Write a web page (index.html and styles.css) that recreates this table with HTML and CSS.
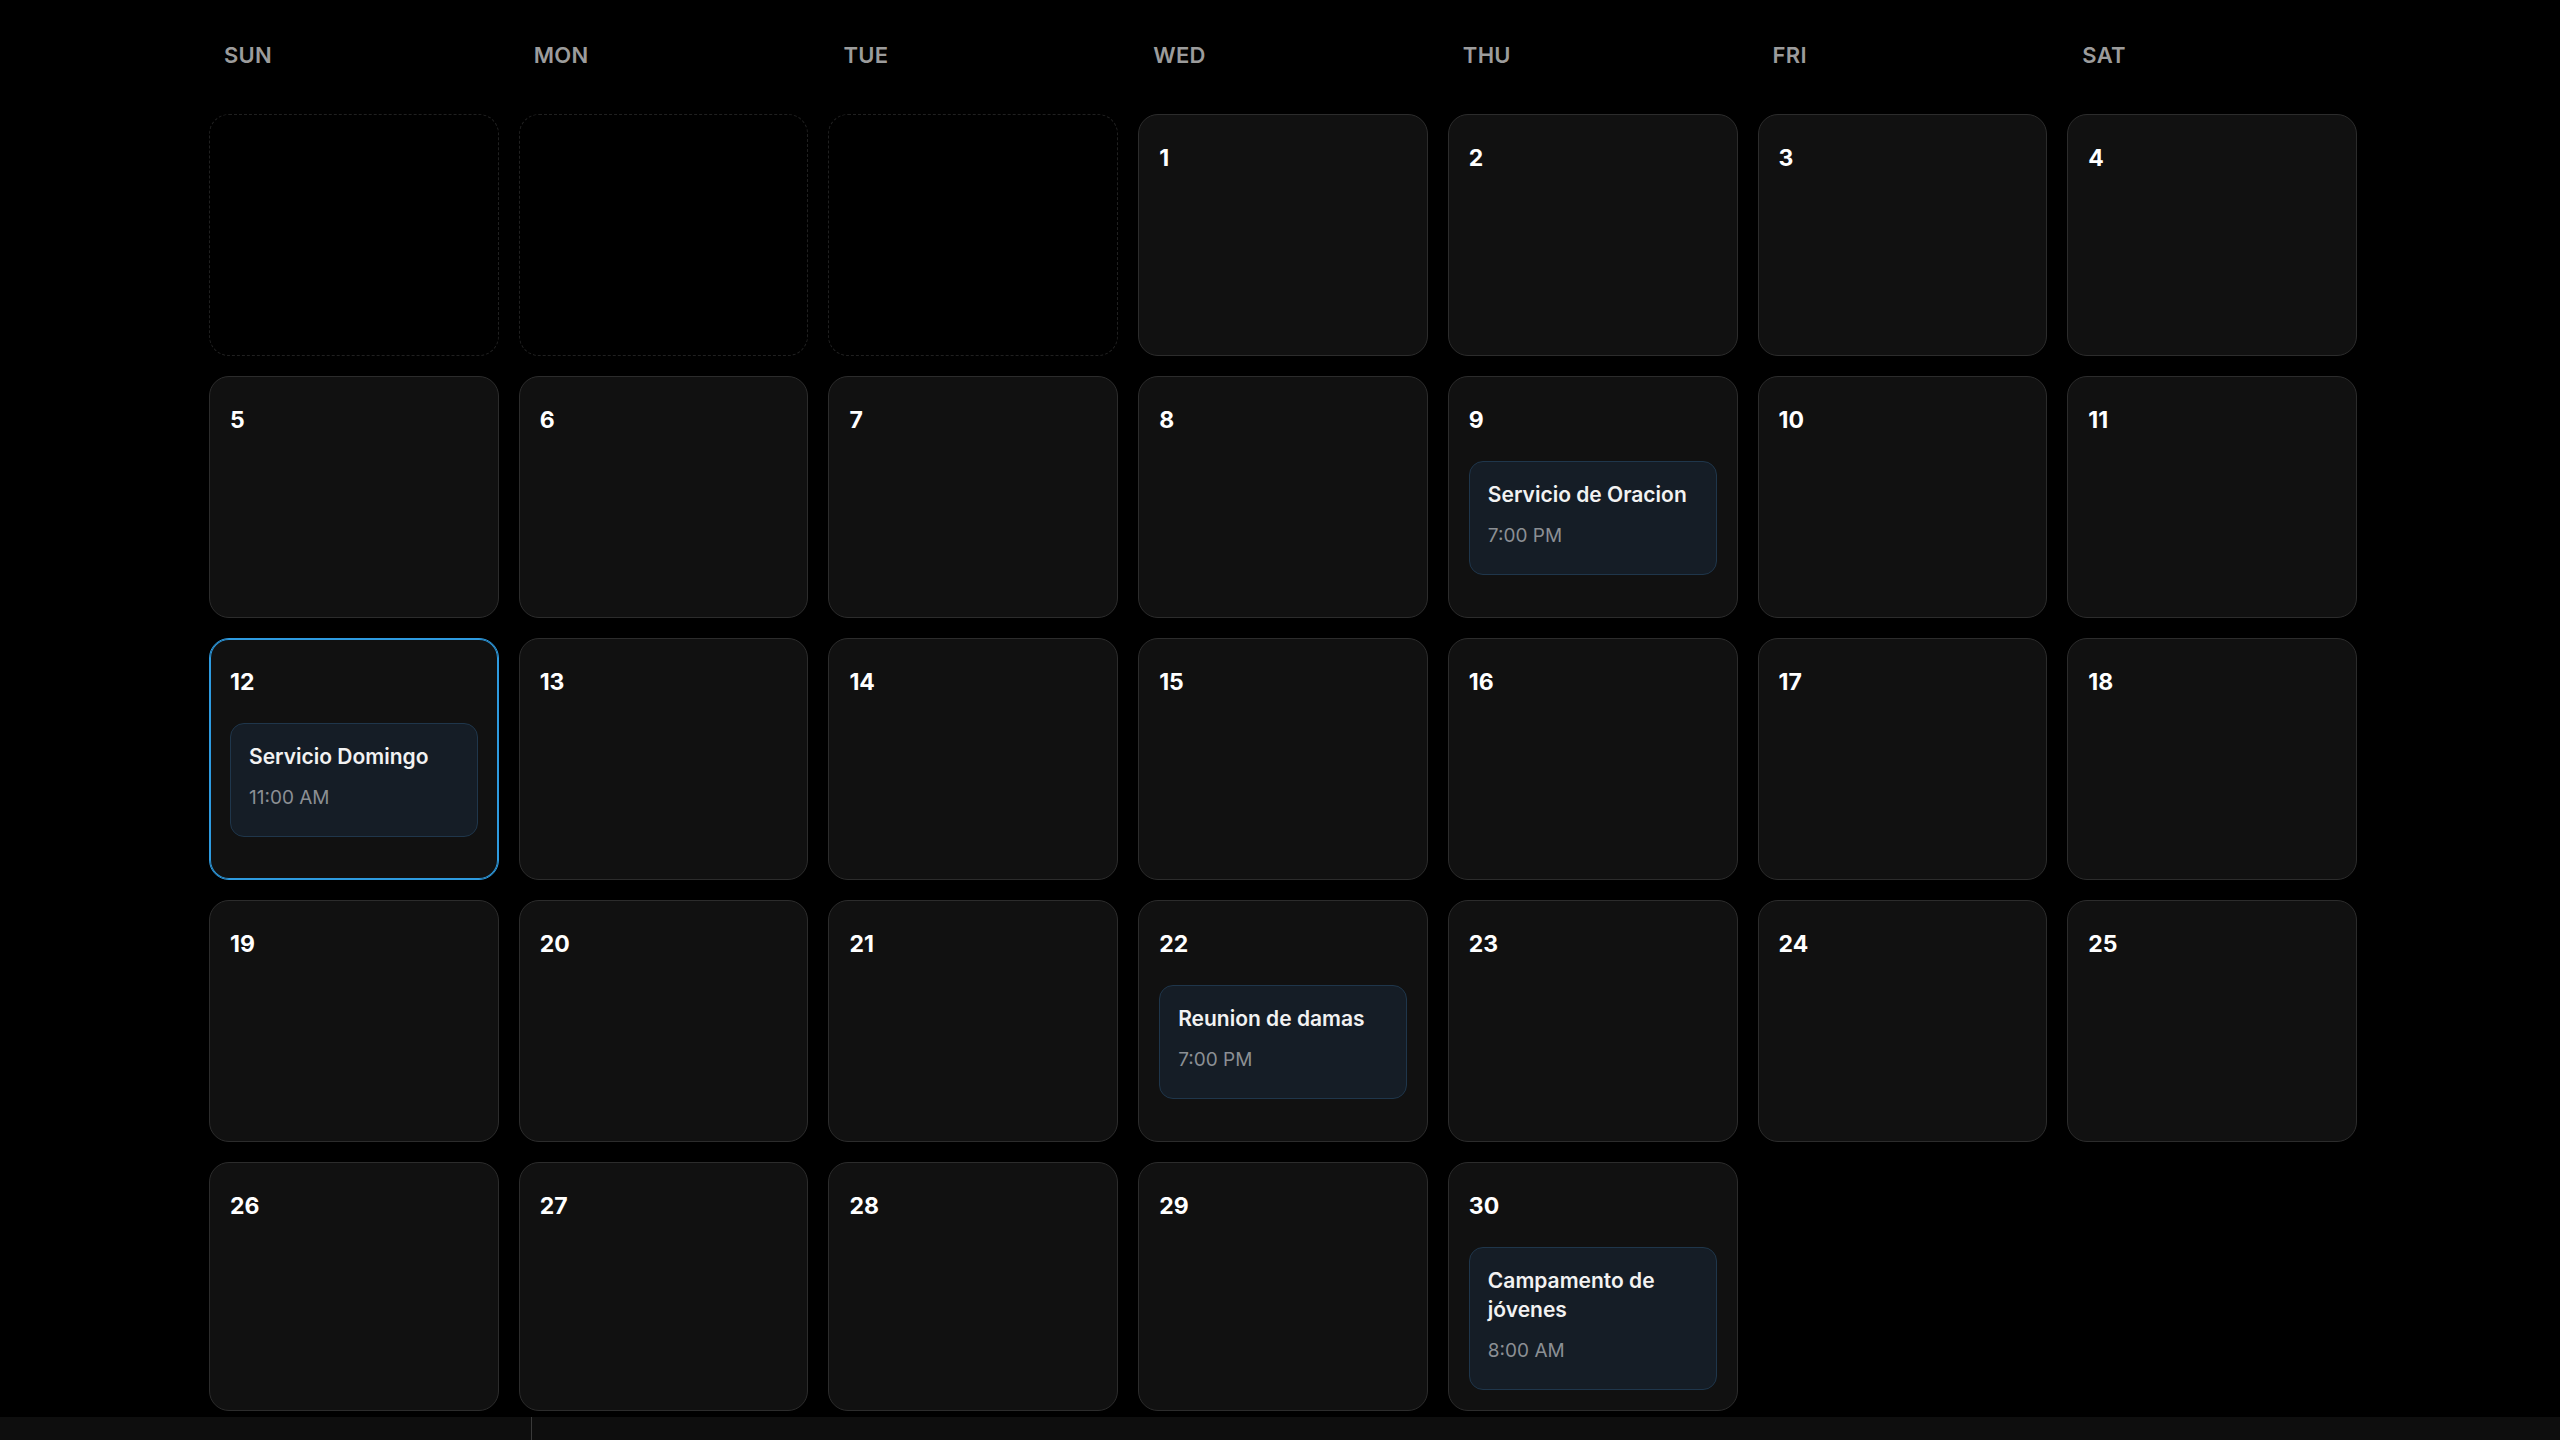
FILE: index.html
```html
<!DOCTYPE html>
<html lang="es">
<head>
<meta charset="utf-8">
<title>Calendario</title>
<link rel="stylesheet" href="styles.css">
</head>
<body>
<main class="calendar">
  <div class="weekdays">
    <div class="weekday">SUN</div>
    <div class="weekday">MON</div>
    <div class="weekday">TUE</div>
    <div class="weekday">WED</div>
    <div class="weekday">THU</div>
    <div class="weekday">FRI</div>
    <div class="weekday">SAT</div>
  </div>
  <div class="days">
    <div class="day day-empty"></div>
    <div class="day day-empty"></div>
    <div class="day day-empty"></div>
    <div class="day"><div class="num">1</div></div>
    <div class="day"><div class="num">2</div></div>
    <div class="day"><div class="num">3</div></div>
    <div class="day"><div class="num">4</div></div>

    <div class="day"><div class="num">5</div></div>
    <div class="day"><div class="num">6</div></div>
    <div class="day"><div class="num">7</div></div>
    <div class="day"><div class="num">8</div></div>
    <div class="day"><div class="num">9</div>
      <div class="event"><div class="event-title">Servicio de Oracion</div><div class="event-time">7:00 PM</div></div>
    </div>
    <div class="day"><div class="num">10</div></div>
    <div class="day"><div class="num">11</div></div>

    <div class="day day-today"><div class="num">12</div>
      <div class="event"><div class="event-title">Servicio Domingo</div><div class="event-time">11:00 AM</div></div>
    </div>
    <div class="day"><div class="num">13</div></div>
    <div class="day"><div class="num">14</div></div>
    <div class="day"><div class="num">15</div></div>
    <div class="day"><div class="num">16</div></div>
    <div class="day"><div class="num">17</div></div>
    <div class="day"><div class="num">18</div></div>

    <div class="day"><div class="num">19</div></div>
    <div class="day"><div class="num">20</div></div>
    <div class="day"><div class="num">21</div></div>
    <div class="day"><div class="num">22</div>
      <div class="event"><div class="event-title">Reunion de damas</div><div class="event-time">7:00 PM</div></div>
    </div>
    <div class="day"><div class="num">23</div></div>
    <div class="day"><div class="num">24</div></div>
    <div class="day"><div class="num">25</div></div>

    <div class="day"><div class="num">26</div></div>
    <div class="day"><div class="num">27</div></div>
    <div class="day"><div class="num">28</div></div>
    <div class="day"><div class="num">29</div></div>
    <div class="day"><div class="num">30</div>
      <div class="event"><div class="event-title">Campamento de jóvenes</div><div class="event-time">8:00 AM</div></div>
    </div>
  </div>
</main>
<footer class="bottom-bar">
  <div class="bottom-left"></div>
  <div class="bottom-right"></div>
</footer>
</body>
</html>
```

FILE: styles.css
```css
* {
  box-sizing: border-box;
}

html, body {
  margin: 0;
  padding: 0;
  background: #000;
  height: 1440px;
  overflow: hidden;
}

body {
  font-family: Inter, "Noto Sans", "Liberation Sans", sans-serif;
  color: #fff;
  display: flex;
  flex-direction: column;
  padding-left: 6px;
}

.calendar {
  width: 2148px;
  margin: 0 auto;
  padding-top: 39px;
}

.weekdays {
  display: grid;
  grid-template-columns: repeat(7, 1fr);
  gap: 20px;
  margin-bottom: 43px;
}

.weekday {
  padding-left: 15px;
  font-size: 22px;
  line-height: 32px;
  font-weight: 600;
  letter-spacing: 0.3px;
  color: #9c9c9c;
}

.days {
  display: grid;
  grid-template-columns: repeat(7, 1fr);
  gap: 20px;
}

.day {
  min-height: 242px;
  background: #111111;
  border: 1px solid #2c2c2c;
  border-radius: 20px;
  padding: 20px;
  display: flex;
  flex-direction: column;
}

.day-empty {
  background: #000;
  border: 1px dashed #202020;
}

.day-today {
  border-color: #2e9be0;
  box-shadow: inset 0 0 0 1px #2e9be0;
}

.num {
  margin-top: 7px;
  font-size: 23px;
  line-height: 32px;
  font-weight: 700;
  color: #fff;
}

.event {
  margin-top: 25px;
  background: #151d26;
  border: 1px solid #1f364b;
  border-radius: 14px;
  padding: 18px 18px 25px;
}

.event-title {
  font-size: 21px;
  line-height: 29px;
  font-weight: 600;
  color: #f2f2f2;
}

.event-time {
  margin-top: 14px;
  font-size: 19px;
  line-height: 26px;
  color: #8b8f94;
}

.bottom-bar {
  margin-top: 6px;
  margin-left: -6px;
  flex: 1;
  display: flex;
  background: #0e0e0e;
}

.bottom-left {
  width: 532px;
  border-right: 1px solid #3a3a3a;
}

.bottom-right {
  flex: 1;
}
```
